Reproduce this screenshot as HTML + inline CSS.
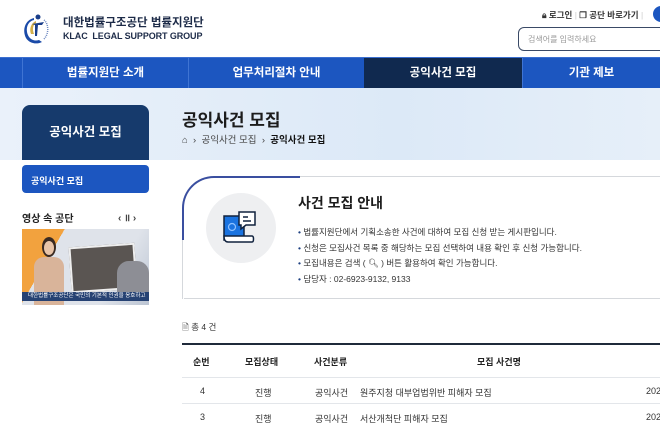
<!DOCTYPE html>
<html><head><meta charset="utf-8"><style>
*{margin:0;padding:0;box-sizing:border-box}
body{width:660px;height:429px;overflow:hidden;background:#fff;font-family:"Liberation Sans","Noto Sans CJK KR",sans-serif;color:#222;position:relative}
.a{position:absolute;white-space:nowrap}
.nav{position:absolute;top:57px;left:0;width:660px;height:31px;background:#1c56c0;border-top:1px solid #3b6fd0}
.nav div{position:absolute;top:0;height:31px;line-height:31px;color:#fff;font-size:11.5px;font-weight:bold;text-align:center;border-left:1px solid #3f74d3}
.row{position:absolute;left:182px;width:478px;border-top:1px solid #e3e6ea;font-size:9px;color:#333}
</style></head><body>
<svg class="a" style="left:20px;top:12px" width="32" height="34" viewBox="0 0 32 34">
<path d="M14 6 C5 8 2 18 6 26 C9 31 16 33 22 30 L19 28 C13 30 8 26 7 20 C6 14 9 9 14 8Z" fill="#1a4aa8"/>
<path d="M16 9 C11 11 9 17 11 22 L14 22 C12 17 13 13 16 11Z" fill="#d4b04a"/>
<circle cx="18" cy="5" r="2.5" fill="#1a3e8a"/>
<path d="M12 12 L24 10 L22 13 L18 13 L17 24 L15 24 L15 13Z" fill="#1a3e8a"/>
<path d="M24 8 C29 12 29 22 24 27" stroke="#6a86c0" stroke-width="1.5" fill="none" stroke-dasharray="1 1"/>
</svg>
<div class="a" style="left:63px;top:14px;font-size:11.5px;font-weight:bold;color:#1d2b48">대한법률구조공단 법률지원단</div>
<div class="a" style="left:63px;top:31px;font-size:9px;font-weight:bold;color:#1d2b48;letter-spacing:-.1px">KLAC &nbsp;LEGAL SUPPORT GROUP</div>
<div class="a" style="left:542px;top:9px;font-size:8.5px;color:#333;font-weight:bold">🔒︎ 로그인 <span style="color:#ccc;font-weight:normal">|</span> ❐ 공단 바로가기 <span style="color:#ccc;font-weight:normal">|</span></div>
<div class="a" style="left:653px;top:6px;width:16px;height:16px;border-radius:50%;background:#1c56c0"></div>
<div class="a" style="left:518px;top:27px;width:150px;height:24px;border:1px solid #3a4a66;border-radius:6px;font-size:8px;color:#999;padding:6px 0 0 9px">검색어를 입력하세요</div>
<div class="nav">
<div style="left:22px;width:166px">법률지원단 소개</div>
<div style="left:188px;width:176px">업무처리절차 안내</div>
<div style="left:364px;width:158px;background:#10294f;border-left:none">공익사건 모집</div>
<div style="left:522px;width:138px">기관 제보</div>
</div>
<div class="a" style="left:0;top:88px;width:660px;height:72px;background:linear-gradient(90deg,#eaf1fa,#dce9f7 60%,#e6eff9)"></div>
<div class="a" style="left:22px;top:105px;width:127px;height:55px;background:#163a6c;border-radius:8px 8px 0 0;color:#fff;font-size:12.5px;font-weight:bold;text-align:center;line-height:54px">공익사건 모집</div>
<div class="a" style="left:22px;top:165px;width:127px;height:28px;background:#1c56c0;border-radius:4px;color:#fff;font-size:9px;font-weight:bold;padding:9px 0 0 9px">공익사건 모집</div>
<div class="a" style="left:22px;top:210px;font-size:10px;font-weight:bold">영상 속 공단</div>
<div class="a" style="left:118px;top:210px;font-size:10px;font-weight:bold;color:#444">‹ ॥ ›</div>
<div class="a" style="left:22px;top:229px;width:127px;height:76px;background:linear-gradient(120deg,#f2a23e 0 25%,#dfe3ea 25% 70%,#bcc5d3);overflow:hidden">
<div class="a" style="left:12px;top:28px;width:30px;height:48px;background:#d9b49a;border-radius:10px 10px 0 0"></div>
<div class="a" style="left:20px;top:8px;width:14px;height:20px;background:#3a2a22;border-radius:50%"></div>
<div class="a" style="left:22px;top:12px;width:10px;height:14px;background:#e8c4a8;border-radius:50%"></div>
<div class="a" style="left:48px;top:16px;width:66px;height:46px;background:#5a5552;border:2px solid #eee;transform:rotate(-4deg)"></div>
<div class="a" style="left:95px;top:32px;width:32px;height:40px;background:#8d8e95;border-radius:12px 12px 0 0"></div>
<div class="a" style="left:0;top:63px;width:127px;height:9px;background:#264273;color:#fff;font-size:5.5px;line-height:9px;padding-left:6px">대한법률구조공단은 국민의 기본적 인권을 옹호하고</div>
</div>
<div class="a" style="left:182px;top:106px;font-size:17px;font-weight:bold;color:#1c1c1c">공익사건 모집</div>
<div class="a" style="left:182px;top:132px;font-size:9.5px;color:#444">⌂ &nbsp;› &nbsp;공익사건 모집 &nbsp;› &nbsp;<b style="color:#111">공익사건 모집</b></div>
<div class="a" style="left:182px;top:176px;width:490px;height:123px;border:1px solid #d5d8dc;border-radius:32px 0 0 0;border-top:2px solid #3a4fa0;border-left:2px solid #3a4fa0"></div>
<div class="a" style="left:300px;top:176px;width:372px;height:2px;background:#fff;border-top:1px solid #d5d8dc"></div>
<div class="a" style="left:182px;top:240px;width:2px;height:59px;background:#fff;border-left:1px solid #d5d8dc"></div>
<div class="a" style="left:206px;top:193px;width:70px;height:70px;border-radius:50%;background:#eeeff1"></div>
<svg class="a" style="left:222px;top:210px" width="38" height="36" viewBox="0 0 38 36">
<path d="M2 6 H22 V30 H2Z" fill="#1a73e0" stroke="#10223e" stroke-width="1.5"/>
<path d="M2 26 H30 C32 26 32 32 30 32 H6 C3 32 2 29 2 26Z" fill="#fff" stroke="#10223e" stroke-width="1.5"/>
<circle cx="10" cy="17" r="3.5" fill="none" stroke="#8fc1ff" stroke-width="1.2"/>
<path d="M17 2 H33 V15 H24 L19 19 V15 H17Z" fill="#fff" stroke="#10223e" stroke-width="1.5"/>
<path d="M21 7 H26 M21 11 H29" stroke="#10223e" stroke-width="1.5"/>
</svg>
<div class="a" style="left:298px;top:193px;font-size:14px;font-weight:bold;color:#1c1c1c">사건 모집 안내</div>
<div class="a" style="left:298px;top:225px;font-size:8.5px;color:#333;line-height:15.5px">
<span style="color:#1c3f80">•</span> 법률지원단에서 기획소송한 사건에 대하여 모집 신청 받는 게시판입니다.<br>
<span style="color:#1c3f80">•</span> 신청은 모집사건 목록 중 해당하는 모집 선택하여 내용 확인 후 신청 가능합니다.<br>
<span style="color:#1c3f80">•</span> 모집내용은 검색 ( 🔍︎ ) 버튼 활용하여 확인 가능합니다.<br>
<span style="color:#1c3f80">•</span> 담당자 : 02-6923-9132, 9133</div>
<div class="a" style="left:182px;top:321px;font-size:8.5px;color:#333">🗎 총 4 건</div>
<div class="a" style="left:182px;top:343px;width:478px;height:2px;background:#1f2a3a"></div>
<div class="a" style="left:193px;top:355px;font-size:9px;font-weight:bold">순번</div>
<div class="a" style="left:245px;top:355px;font-size:9px;font-weight:bold">모집상태</div>
<div class="a" style="left:314px;top:355px;font-size:9px;font-weight:bold">사건분류</div>
<div class="a" style="left:477px;top:355px;font-size:9px;font-weight:bold">모집 사건명</div>
<div class="row" style="top:377px;height:26px"><span class="a" style="left:18px;top:8px">4</span><span class="a" style="left:73px;top:8px">진행</span><span class="a" style="left:133px;top:8px">공익사건</span><span class="a" style="left:178px;top:8px">원주지청 대부업법위반 피해자 모집</span><span class="a" style="left:464px;top:8px">202</span></div>
<div class="row" style="top:403px;height:26px"><span class="a" style="left:18px;top:8px">3</span><span class="a" style="left:73px;top:8px">진행</span><span class="a" style="left:133px;top:8px">공익사건</span><span class="a" style="left:178px;top:8px">서산개척단 피해자 모집</span><span class="a" style="left:464px;top:8px">202</span></div>
</body></html>
